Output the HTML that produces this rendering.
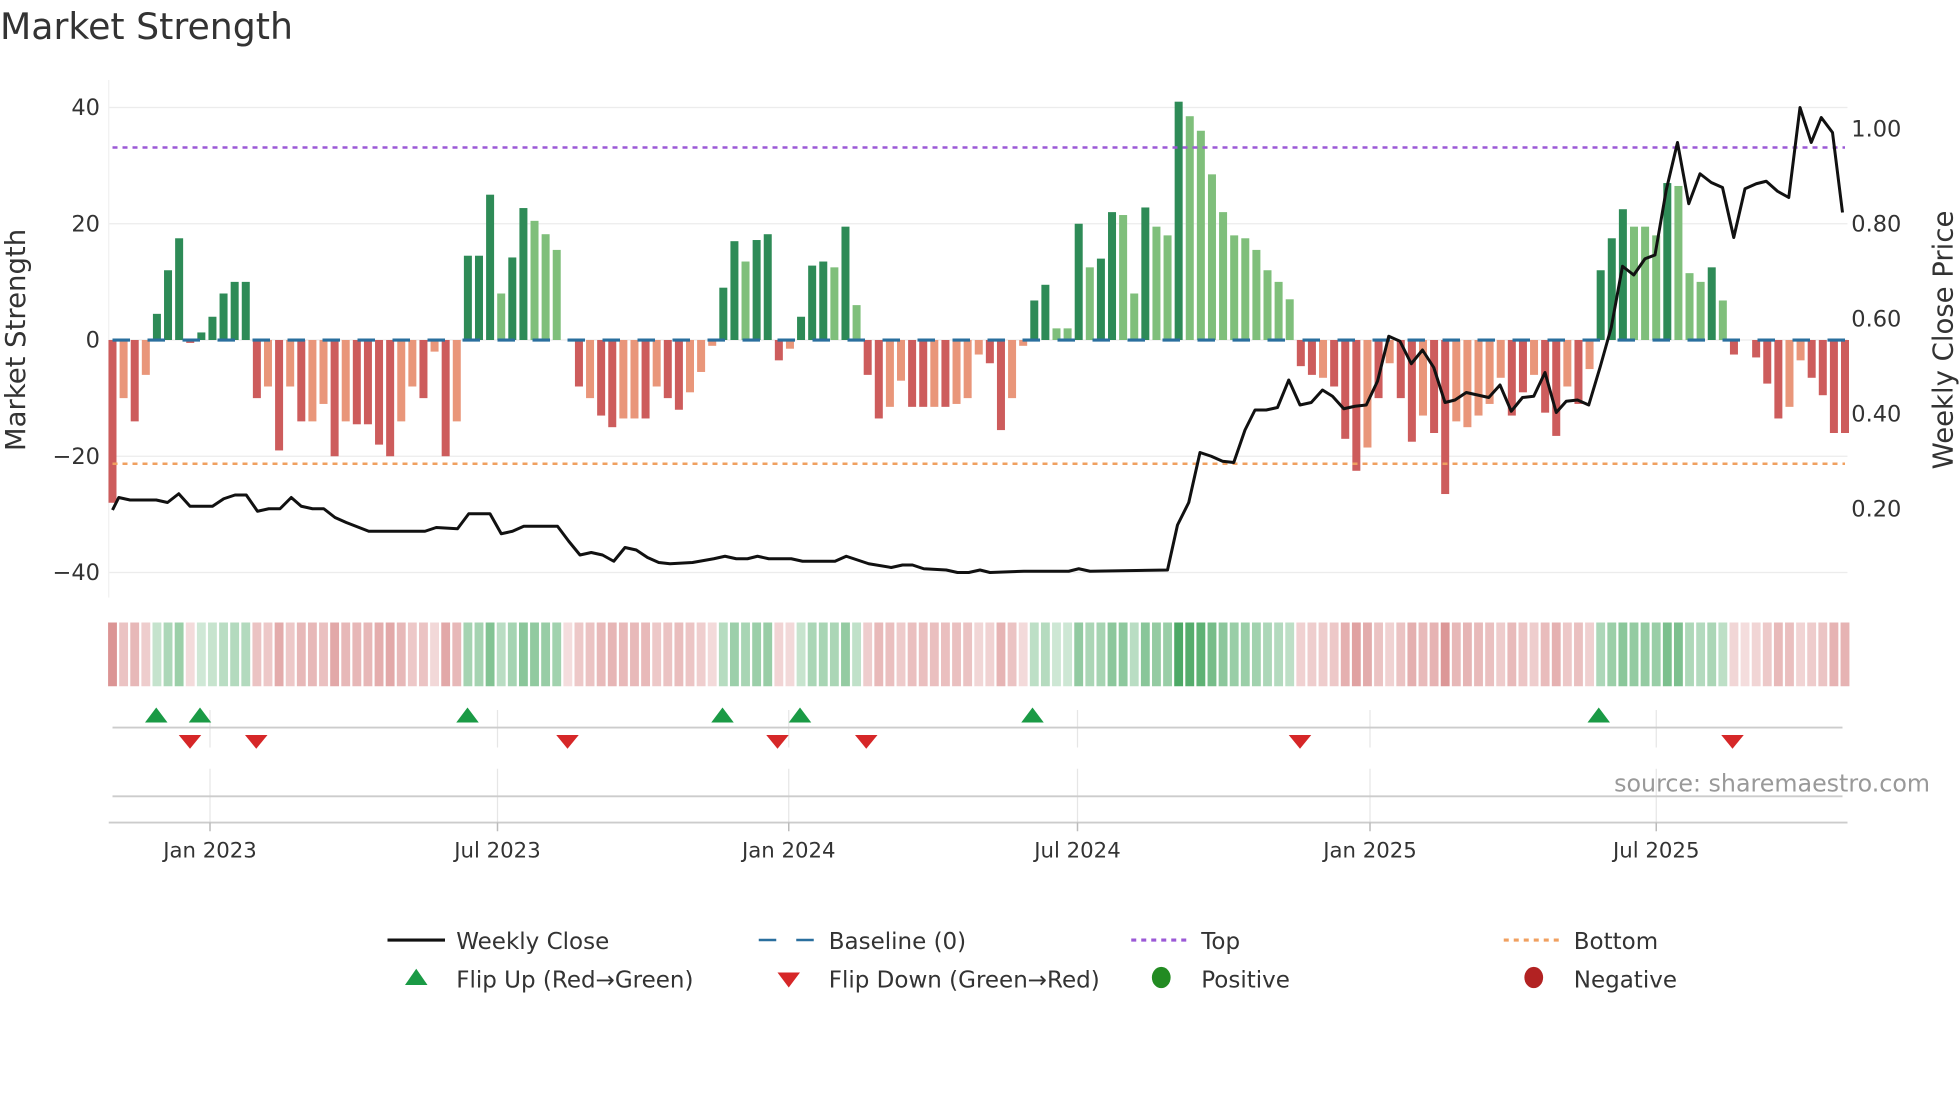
<!DOCTYPE html>
<html><head><meta charset="utf-8"><style>
html,body{margin:0;padding:0;background:#fff;}
svg{display:block;font-family:"DejaVu Sans","Liberation Sans",sans-serif;}
</style></head><body>
<svg id="s" width="1960" height="1102" viewBox="0 0 1568 881.6" xmlns="http://www.w3.org/2000/svg">
<rect width="1568" height="882" fill="#fff"/>
<text x="0" y="31" font-size="29" fill="#333">Market Strength</text>
<g stroke="#ececec" stroke-width="1">
<line x1="87" x2="1478" y1="86" y2="86"/><line x1="87" x2="1478" y1="179" y2="179"/><line x1="87" x2="1478" y1="272" y2="272"/><line x1="87" x2="1478" y1="365" y2="365"/><line x1="87" x2="1478" y1="458" y2="458"/>
</g>
<line x1="87" x2="87" y1="64" y2="478" stroke="#f0f0f0"/>
<g font-size="18" fill="#333" text-anchor="end">
<text x="80" y="92">40</text><text x="80" y="185">20</text><text x="80" y="278">0</text><text x="80" y="371">−20</text><text x="80" y="464">−40</text>
</g>
<g font-size="18" fill="#333">
<text x="1481" y="109">1.00</text><text x="1481" y="185">0.80</text><text x="1481" y="261">0.60</text><text x="1481" y="337">0.40</text><text x="1481" y="413">0.20</text>
</g>
<text transform="translate(20,272) rotate(-90)" font-size="22" fill="#333" text-anchor="middle">Market Strength</text>
<text transform="translate(1562,272) rotate(-90)" font-size="22" fill="#333" text-anchor="middle">Weekly Close Price</text>
<g id="bars"></g>
<line x1="90" x2="1476" y1="118" y2="118" stroke="#9b59d6" stroke-width="2" stroke-dasharray="4,4"/>
<line x1="90" x2="1476" y1="371" y2="371" stroke="#f0a060" stroke-width="2" stroke-dasharray="4,4"/>
<line x1="90" x2="1476" y1="272" y2="272" stroke="#2a6f9e" stroke-width="2.5" stroke-dasharray="14,14"/>
<polyline id="price" fill="none" stroke="#111" stroke-width="2.4" stroke-linejoin="round"/>
<g id="heat"></g>
<g stroke="#e6e6e6" stroke-width="1">
<line x1="168" x2="168" y1="568" y2="598"/><line x1="398" x2="398" y1="568" y2="598"/><line x1="631" x2="631" y1="568" y2="598"/><line x1="862" x2="862" y1="568" y2="598"/><line x1="1096" x2="1096" y1="568" y2="598"/><line x1="1325" x2="1325" y1="568" y2="598"/>
<line x1="168" x2="168" y1="615" y2="658"/><line x1="398" x2="398" y1="615" y2="658"/><line x1="631" x2="631" y1="615" y2="658"/><line x1="862" x2="862" y1="615" y2="658"/><line x1="1096" x2="1096" y1="615" y2="658"/><line x1="1325" x2="1325" y1="615" y2="658"/>
</g>
<line x1="90" x2="1474" y1="582" y2="582" stroke="#ccc" stroke-width="1.5"/>
<line x1="90" x2="1474" y1="637" y2="637" stroke="#ccc" stroke-width="1.5"/>
<line x1="87" x2="1478" y1="658" y2="658" stroke="#ccc" stroke-width="1.5"/>
<g stroke="#bbb" stroke-width="1.2">
<line x1="168" x2="168" y1="658" y2="665"/><line x1="398" x2="398" y1="658" y2="665"/><line x1="631" x2="631" y1="658" y2="665"/><line x1="862" x2="862" y1="658" y2="665"/><line x1="1096" x2="1096" y1="658" y2="665"/><line x1="1325" x2="1325" y1="658" y2="665"/>
</g>
<g id="flips"></g>
<text x="1544" y="633" font-size="19" fill="#999" text-anchor="end">source: sharemaestro.com</text>
<g font-size="17" fill="#333" text-anchor="middle">
<text x="168" y="686">Jan 2023</text><text x="398" y="686">Jul 2023</text><text x="631" y="686">Jan 2024</text><text x="862" y="686">Jul 2024</text><text x="1096" y="686">Jan 2025</text><text x="1325" y="686">Jul 2025</text>
</g>
<g font-size="18.4" fill="#333">
<line x1="310" x2="356" y1="752" y2="752" stroke="#111" stroke-width="2.5"/>
<text x="365" y="759">Weekly Close</text>
<line x1="607" x2="652" y1="752" y2="752" stroke="#2a6f9e" stroke-width="2" stroke-dasharray="14,16"/>
<text x="663" y="759">Baseline (0)</text>
<line x1="905" x2="950" y1="752" y2="752" stroke="#9b59d6" stroke-width="2.5" stroke-dasharray="4,4"/>
<text x="961" y="759">Top</text>
<line x1="1203" x2="1248" y1="752" y2="752" stroke="#f0a060" stroke-width="2.5" stroke-dasharray="4,4"/>
<text x="1259" y="759">Bottom</text>
<polygon points="324,788 342,788 333,775" fill="#1a9a45"/>
<text x="365" y="790">Flip Up (Red→Green)</text>
<polygon points="622,778 640,778 631,790" fill="#d62728"/>
<text x="663" y="790">Flip Down (Green→Red)</text>
<ellipse cx="929" cy="782" rx="7.5" ry="8.5" fill="#228b22"/>
<text x="961" y="790">Positive</text>
<ellipse cx="1227" cy="782" rx="7.5" ry="8.5" fill="#b22222"/>
<text x="1259" y="790">Negative</text>
</g>
</svg>
<script>
var D="-28R -10O -14R -6O 4.5D 12D 17.5D -0.5R 1.3D 4D 8D 10D 10D -10R -8O -19R -8O -14R -14O -11O -20R -14O -14.5R -14.5R -18R -20R -14O -8O -10R -2O -20R -14O 14.5D 14.5D 25D 8L 14.2D 22.7D 20.5L 18.2L 15.5L 0R -8R -10O -13R -15R -13.5O -13.5O -13.5R -8O -10R -12R -9O -5.5O -1O 9D 17D 13.5L 17.2D 18.2D -3.5R -1.5O 4D 12.8D 13.5D 12.5L 19.5D 6L -6R -13.5R -11.5O -7O -11.5R -11.5R -11.5O -11.5R -11O -10O -2.5O -4R -15.5R -10O -1O 6.8D 9.5D 2L 2L 20D 12.5L 14D 22D 21.5L 8L 22.8D 19.5L 18L 41D 38.5L 36L 28.5L 22L 18L 17.5L 15.5L 12L 10L 7L -4.5R -6R -6.5O -8R -17R -22.5R -18.5O -10R -4O -10R -17.5R -13O -16R -26.5R -14O -15O -13O -11O -6.5O -13R -9R -6O -12.5R -16.5R -8O -11R -5O 12D 17.5D 22.5D 19.5L 19.5L 18L 27D 26.5L 11.5L 10L 12.5D 6.8L -2.5R 0R -3R -7.5R -13.5R -11.5O -3.5O -6.5R -9.5R -16R -16R".split(" ");
var col={D:"#2e8b57",L:"#7fbf7b",R:"#cd5c5c",O:"#e9967a"};
var n=D.length,x0=90,x1=1476,st=(x1-x0)/(n-1),ns="http://www.w3.org/2000/svg";
var bars=document.getElementById("bars"),heat=document.getElementById("heat");
function el(t,a,p){var e=document.createElementNS(ns,t);for(var k in a)e.setAttribute(k,a[k]);p.appendChild(e);return e;}
for(var i=0;i<n;i++){
 var s=D[i],c=s.slice(-1),v=parseFloat(s),x=x0+i*st;
 var h=Math.abs(v)*4.65,y=v>=0?272-h:272;
 if(h>0.3)el("rect",{x:x-3.2,y:y,width:6.4,height:h,fill:col[c]},bars);
 var a=0.22+0.68*Math.min(Math.abs(v)/41,1);
 var f=v>0?"rgba(58,160,85,"+a+")":"rgba(200,90,90,"+(a*0.95)+")";
 el("rect",{x:x-st/2+0.9,y:498,width:st-1.8,height:51,fill:f},heat);
}
var P="90,408 95,398 104,400 125,400 134,402 143,395 152,405 170,405 179,399 188,396 197,396 206,409 215,407 224,407 233,398 241,405 250,407 259,407 268,414 277,418 295,425 340,425 349,422 366,423 375,411 392,411 401,427 410,425 419,421 446,421 455,433 464,444 473,442 482,444 491,449 500,438 509,440 518,446 527,450 536,451 554,450 571,447 580,445 589,447 598,447 606,445 615,447 633,447 642,449 668,449 677,445 686,448 695,451 713,454 722,452 730,452 739,455 757,456 766,458 775,458 784,456 792,458 819,457 855,457 863,455 872,457 934,456 942,420 951,402 960,362 969,365 978,369 987,370 996,344 1004,328 1013,328 1022,326 1031,304 1040,324 1049,322 1058,312 1066,317 1075,327 1084,325 1093,324 1102,305 1111,269 1120,273 1129,291 1138,280 1147,294 1156,322 1164,320 1173,314 1182,316 1191,318 1200,308 1209,329 1218,318 1227,317 1236,298 1245,330 1253,321 1262,320 1271,324 1280,294 1289,262 1298,213 1307,220 1316,207 1324,204 1333,152 1342,114 1351,163 1360,139 1369,146 1378,150 1387,190 1396,151 1405,147 1413,145 1422,153 1431,158 1440,86 1449,114 1457,94 1466,106 1474,170";
document.getElementById("price").setAttribute("points",P);
var fl=document.getElementById("flips");
[125,160,374,578,640,826,1279].forEach(function(x){el("polygon",{points:(x-9)+",578 "+(x+9)+",578 "+x+",566",fill:"#1a9a45"},fl);});
[152,205,454,622,693,1040,1386].forEach(function(x){el("polygon",{points:(x-9)+",588 "+(x+9)+",588 "+x+",599",fill:"#d62728"},fl);});
</script>
</body></html>
